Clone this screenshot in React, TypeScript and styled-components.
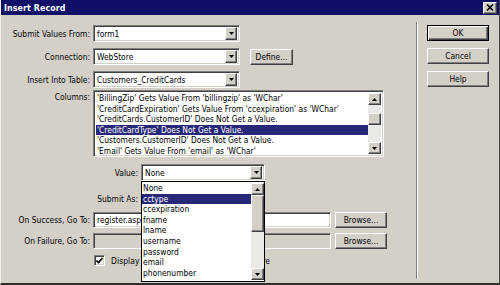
import React from "react";
import styled, { createGlobalStyle, css } from "styled-components";

const Global = createGlobalStyle`
  html, body { margin: 0; padding: 0; background: #d4d0c8; }
  body { width: 500px; height: 285px; overflow: hidden; }
  * { box-sizing: border-box; }
`;

const FONT = `"DejaVu Sans Condensed", "DejaVu Sans", sans-serif`;

const Dialog = styled.div`
  width: 500px;
  height: 285px;
  background: #d4d0c8;
  border-left: 1px solid #f4f2ee;
  border-right: 1px solid #404040;
  border-bottom: 2px solid #303030;
  display: flex;
  flex-direction: column;
  font-family: ${FONT};
  font-stretch: condensed;
  font-size: 8.4px;
  color: #000;
  overflow: hidden;
`;

const TitleBar = styled.div`
  height: 15px;
  flex: none;
  background: #0e1068;
  display: flex;
  align-items: center;
  justify-content: space-between;
  padding: 0 2px 0 3px;
`;

const Title = styled.span`
  color: #fff;
  font-weight: bold;
  font-size: 8.8px;
  letter-spacing: 0.1px;
`;

const raised = css`
  background: #d4d0c8;
  border: 1px solid;
  border-color: #ffffff #404040 #404040 #ffffff;
  box-shadow: inset -1px -1px 0 #808080;
`;

const sunken = css`
  border: 1px solid;
  border-color: #808080 #ffffff #ffffff #808080;
  box-shadow: inset 1px 1px 0 #404040, inset -1px -1px 0 #d4d0c8;
`;

const CloseBtn = styled.div`
  ${raised};
  width: 14px;
  height: 12px;
  display: flex;
  align-items: center;
  justify-content: center;
`;

const Body = styled.div`
  flex: 1;
  display: flex;
  position: relative;
`;

const Main = styled.div`
  width: 415px;
  flex: none;
  padding-top: 10px;
  display: flex;
  flex-direction: column;
`;

const Separator = styled.div`
  width: 2px;
  flex: none;
  margin: 7px 0 4px;
  border-left: 1px solid #808080;
  border-right: 1px solid #ffffff;
`;

const Side = styled.div`
  flex: 1;
  padding: 10px 0 0 9px;
  display: flex;
  flex-direction: column;
  gap: 7px;
`;

const Row = styled.div<{ $mt: number }>`
  display: flex;
  align-items: center;
  margin-top: ${(p) => p.$mt}px;
`;

const TopRow = styled(Row)`
  align-items: flex-start;
`;

const Label = styled.div<{ $w: number; $pt?: number }>`
  width: ${(p) => p.$w}px;
  flex: none;
  text-align: right;
  padding-right: 3px;
  padding-top: ${(p) => p.$pt ?? 0}px;
  white-space: nowrap;
`;

const SelectBox = styled.div<{ $w: number }>`
  ${sunken};
  position: relative;
  width: ${(p) => p.$w}px;
  height: 17px;
  background: #fff;
  display: flex;
  align-items: center;
  padding: 0 2px 0 3px;
`;

const SelectText = styled.span`
  flex: 1;
  white-space: nowrap;
`;

const ArrowBtn = styled.div`
  ${raised};
  width: 12px;
  height: 13px;
  flex: none;
  display: flex;
  align-items: center;
  justify-content: center;
`;

const TextBox = styled.div<{ $w: number; $disabled?: boolean }>`
  ${sunken};
  width: ${(p) => p.$w}px;
  height: 16px;
  background: ${(p) => (p.$disabled ? "#d4d0c8" : "#fff")};
  padding: 0 3px;
  display: flex;
  align-items: center;
  white-space: nowrap;
  overflow: hidden;
`;

const Button = styled.div<{ $w: number; $default?: boolean; $ml?: number }>`
  width: ${(p) => p.$w}px;
  height: 16px;
  margin-left: ${(p) => p.$ml ?? 0}px;
  display: flex;
  align-items: center;
  justify-content: center;
  background: #d4d0c8;
  flex: none;
  ${(p) =>
    p.$default
      ? css`
          border: 1px solid #000;
          box-shadow: inset 1px 1px 0 #ffffff, inset -1px -1px 0 #404040, inset -2px -2px 0 #808080;
        `
      : raised}
`;

const ListBox = styled.div<{ $w: number; $h: number }>`
  ${sunken};
  width: ${(p) => p.$w}px;
  height: ${(p) => p.$h}px;
  background: #fff;
  display: flex;
  padding: 2px;
`;

const ListItems = styled.div`
  flex: 1;
  display: flex;
  flex-direction: column;
  overflow: hidden;
`;

const ListItem = styled.div<{ $sel?: boolean; $lh: number }>`
  height: ${(p) => p.$lh}px;
  line-height: ${(p) => p.$lh}px;
  flex: none;
  padding-left: 1px;
  white-space: nowrap;
  background: ${(p) => (p.$sel ? "#272878" : "transparent")};
  color: ${(p) => (p.$sel ? "#fff" : "#000")};
`;

const ScrollBar = styled.div`
  width: 13px;
  flex: none;
  display: flex;
  flex-direction: column;
  background: #ebe9e5;
`;

const ScrollBtn = styled.div`
  ${raised};
  height: 12px;
  flex: none;
  display: flex;
  align-items: center;
  justify-content: center;
`;

const Thumb = styled.div<{ $top: number; $h: number }>`
  ${raised};
  margin-top: ${(p) => p.$top}px;
  height: ${(p) => p.$h}px;
  flex: none;
`;

const Spacer = styled.div`
  flex: 1;
`;

const DropWrap = styled.div`
  position: relative;
`;

const DropList = styled.div`
  position: absolute;
  left: 0;
  top: 17px;
  width: 124px;
  height: 101px;
  background: #fff;
  border: 1px solid #000;
  display: flex;
  z-index: 10;
  padding: 1px 0;
`;

const CheckBox = styled.div`
  ${sunken};
  width: 11px;
  height: 11px;
  background: #fff;
  display: flex;
  align-items: center;
  justify-content: center;
  margin-left: 93px;
  flex: none;
`;

const CheckLabel = styled.span`
  margin-left: 6px;
  white-space: nowrap;
  letter-spacing: 0.12px;
`;

const Tri = ({ up }: { up?: boolean }) => (
  <svg width="5" height="3" viewBox="0 0 5 3">
    <polygon points={up ? "2.5,0 5,3 0,3" : "0,0 5,0 2.5,3"} fill="#000" />
  </svg>
);

const Select = ({ w, value }: { w: number; value: string }) => (
  <SelectBox $w={w}>
    <SelectText>{value}</SelectText>
    <ArrowBtn>
      <Tri />
    </ArrowBtn>
  </SelectBox>
);

const columns = [
  "'BillingZip' Gets Value From 'billingzip' as 'WChar'",
  "'CreditCardExpiration' Gets Value From 'ccexpiration' as 'WChar'",
  "'CreditCards.CustomerID' Does Not Get a Value.",
  "'CreditCardType' Does Not Get a Value.",
  "'Customers.CustomerID' Does Not Get a Value.",
  "'Email' Gets Value From 'email' as 'WChar'",
];

const options = [
  "None",
  "cctype",
  "ccexpiration",
  "fname",
  "lname",
  "username",
  "password",
  "email",
  "phonenumber",
];

export default function App() {
  return (
    <>
      <Global />
      <Dialog>
        <TitleBar>
          <Title>Insert Record</Title>
          <CloseBtn>
            <svg width="8" height="7" viewBox="0 0 8 7">
              <path d="M1 0.5 L7 6.5 M7 0.5 L1 6.5" stroke="#000" strokeWidth="1.6" />
            </svg>
          </CloseBtn>
        </TitleBar>
        <Body>
          <Main>
            <Row $mt={0}>
              <Label $w={92}>Submit Values From:</Label>
              <Select w={147} value="form1" />
            </Row>
            <Row $mt={6}>
              <Label $w={92}>Connection:</Label>
              <Select w={147} value="WebStore" />
              <Button $w={43} $ml={10}>Define...</Button>
            </Row>
            <Row $mt={6}>
              <Label $w={92}>Insert Into Table:</Label>
              <Select w={147} value="Customers_CreditCards" />
            </Row>
            <TopRow $mt={2}>
              <Label $w={92} $pt={2}>Columns:</Label>
              <ListBox $w={291} $h={67}>
                <ListItems>
                  {columns.map((c, i) => (
                    <ListItem key={c} $lh={10.5} $sel={i === 3}>
                      {c}
                    </ListItem>
                  ))}
                </ListItems>
                <ScrollBar>
                  <ScrollBtn>
                    <Tri up />
                  </ScrollBtn>
                  <Thumb $top={8} $h={12} />
                  <Spacer />
                  <ScrollBtn>
                    <Tri />
                  </ScrollBtn>
                </ScrollBar>
              </ListBox>
            </TopRow>
            <Row $mt={7}>
              <Label $w={140}>Value:</Label>
              <DropWrap>
                <Select w={124} value="None" />
                <DropList>
                  <ListItems>
                    {options.map((o, i) => (
                      <ListItem key={o} $lh={10.6} $sel={i === 1}>
                        {o}
                      </ListItem>
                    ))}
                  </ListItems>
                  <ScrollBar>
                    <ScrollBtn>
                      <Tri up />
                    </ScrollBtn>
                    <Thumb $top={0} $h={37} />
                    <Spacer />
                    <ScrollBtn>
                      <Tri />
                    </ScrollBtn>
                  </ScrollBar>
                </DropList>
              </DropWrap>
            </Row>
            <Row $mt={9}>
              <Label $w={140}>Submit As:</Label>
              <Select w={124} value="" />
            </Row>
            <Row $mt={5}>
              <Label $w={92}>On Success, Go To:</Label>
              <TextBox $w={238}>register.asp</TextBox>
              <Button $w={52} $ml={4}>Browse...</Button>
            </Row>
            <Row $mt={5}>
              <Label $w={92}>On Failure, Go To:</Label>
              <TextBox $w={238} $disabled />
              <Button $w={52} $ml={4}>Browse...</Button>
            </Row>
            <Row $mt={6}>
              <CheckBox>
                <svg width="7" height="7" viewBox="0 0 7 7">
                  <path d="M0.5 3.5 L2.5 5.5 L6.5 1" stroke="#000" strokeWidth="1.6" fill="none" />
                </svg>
              </CheckBox>
              <CheckLabel>Display debugging information on failure</CheckLabel>
            </Row>
          </Main>
          <Separator />
          <Side>
            <Button $w={62} $default>OK</Button>
            <Button $w={62}>Cancel</Button>
            <Button $w={62}>Help</Button>
          </Side>
        </Body>
      </Dialog>
    </>
  );
}
